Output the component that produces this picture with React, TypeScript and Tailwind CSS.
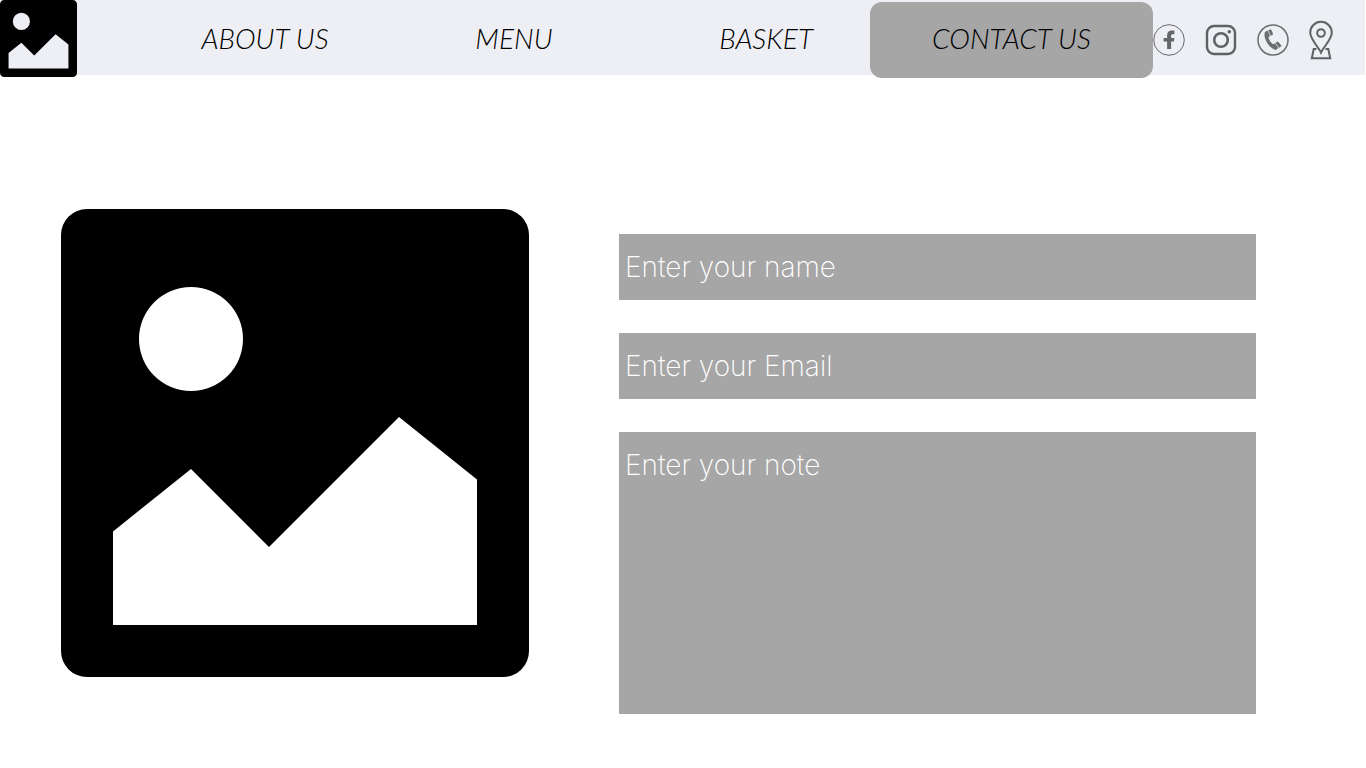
import React from "react";

function ImageGlyph({ className }: { className: string }) {
  return (
    <svg viewBox="0 0 36 36" className={className} aria-hidden="true">
      <path
        fillRule="evenodd"
        fill="#000"
        d="M2 0H34A2 2 0 0 1 36 2V34A2 2 0 0 1 34 36H2A2 2 0 0 1 0 34V2A2 2 0 0 1 2 0ZM10 6A4 4 0 1 0 10 14A4 4 0 1 0 10 6ZM4 24.8V32H32V20.8L26 16L16 26L10 20Z"
      />
    </svg>
  );
}

function FacebookIcon() {
  return (
    <svg viewBox="0 0 32 32" className="size-8" aria-hidden="true">
      <circle cx="16" cy="16" r="15.3" fill="none" stroke="#666769" strokeWidth="1" />
      <path
        fill="#666769"
        d="M14.1 25V17.4H10.6V13.9H14.1V11.4C14.1 8.4 15.8 6.6 18.8 6.6H21.4V10.2H19.8C18.6 10.2 18.1 10.7 18.1 11.7V13.9H21.4L20.9 17.4H18.1V25Z"
      />
    </svg>
  );
}

function InstagramIcon() {
  return (
    <svg viewBox="0 0 32 32" className="size-8" fill="none" stroke="#606163" aria-hidden="true">
      <rect x="2" y="2" width="28" height="28" rx="7" strokeWidth="2.4" />
      <circle cx="16" cy="16" r="6.8" strokeWidth="2.6" />
      <circle cx="24.3" cy="7.7" r="1.8" fill="#606163" stroke="none" />
    </svg>
  );
}

function PhoneIcon() {
  return (
    <svg viewBox="0 0 32 32" className="size-8" aria-hidden="true">
      <circle cx="16" cy="16" r="15" fill="none" stroke="#6c6d6f" strokeWidth="1.5" />
      <path
        fill="#6c6d6f"
        d="M8.6 7.6L10.6 6.5L13.2 11.9L11.5 13C11.7 15.5 13.6 18.5 16.1 20.3L17.8 19.3L21.4 23.8L19.7 25.4C18 26.8 13.6 24.1 10.6 19.6C7.4 14.7 6.5 9.3 8.6 7.6ZM11.2 6.2L13 5.5C13.6 5.2 14.2 5.5 14.4 6L15.9 9.6C16.1 10.2 15.9 10.7 15.4 11L13.8 11.7ZM18.4 19L19.8 18C20.3 17.6 20.9 17.7 21.3 18.1L24.1 21.2C24.5 21.7 24.4 22.2 24 22.6L22.2 23.7Z"
      />
    </svg>
  );
}

function LocationIcon() {
  return (
    <svg
      viewBox="0 0 24 40"
      className="h-10 w-6"
      fill="none"
      stroke="#606163"
      strokeWidth="2"
      aria-hidden="true"
    >
      <path d="M12 32.5C9.5 27 1.2 19.5 1.2 12.6A10.8 10.8 0 0 1 22.8 12.6C22.8 19.5 14.5 27 12 32.5Z" />
      <circle cx="12" cy="13" r="3.8" />
      <path d="M7.5 29H4.7L2.8 38.2H21.2L19.3 29H16.5" />
    </svg>
  );
}

const links = [
  { label: "ABOUT US", href: "#about" },
  { label: "MENU", href: "#menu" },
  { label: "BASKET", href: "#basket" },
  { label: "CONTACT US", href: "#contact", active: true },
];

const field =
  "block w-full appearance-none rounded-none border-0 bg-[#a6a6a6] px-1.5 font-['Inter',sans-serif] text-[28px] font-extralight text-white outline-none placeholder:text-white placeholder:opacity-100";

export default function App() {
  return (
    <div className="min-h-screen bg-white">
      <header className="mr-px flex h-[75px] items-start bg-[#eeeff4]">
        <a href="#home" aria-label="Home" className="shrink-0">
          <ImageGlyph className="block size-[77px]" />
        </a>
        <nav className="ml-[87px] grid flex-1 grid-cols-[202fr_296fr_208fr_283fr] pt-0.5">
          {links.map((link) => (
            <a
              key={link.label}
              href={link.href}
              className={`flex h-[76px] items-center justify-center rounded-xl pb-1 font-['Lato',sans-serif] text-[28px] font-light whitespace-nowrap text-black italic ${
                link.active ? "bg-[#a6a6a6]" : ""
              }`}
            >
              {link.label}
            </a>
          ))}
        </nav>
        <div className="flex h-20 shrink-0 items-center gap-5 pr-8">
          <a href="#facebook" aria-label="Facebook">
            <FacebookIcon />
          </a>
          <a href="#instagram" aria-label="Instagram">
            <InstagramIcon />
          </a>
          <a href="#phone" aria-label="Phone">
            <PhoneIcon />
          </a>
          <a href="#location" aria-label="Location">
            <LocationIcon />
          </a>
        </div>
      </header>
      <main className="flex items-start gap-[90px] pt-[134px] pr-[110px] pb-[54px] pl-[61px]">
        <div className="flex-[468]">
          <ImageGlyph className="block w-full" />
        </div>
        <form className="flex flex-[637] flex-col gap-[33px] pt-[25px]">
          <input type="text" aria-label="Name" placeholder="Enter your name" className={`h-[66px] ${field}`} />
          <input type="email" aria-label="Email" placeholder="Enter your Email" className={`h-[66px] ${field}`} />
          <textarea
            aria-label="Note"
            placeholder="Enter your note"
            className={`h-[282px] resize-none pt-3 ${field}`}
          />
        </form>
      </main>
    </div>
  );
}
